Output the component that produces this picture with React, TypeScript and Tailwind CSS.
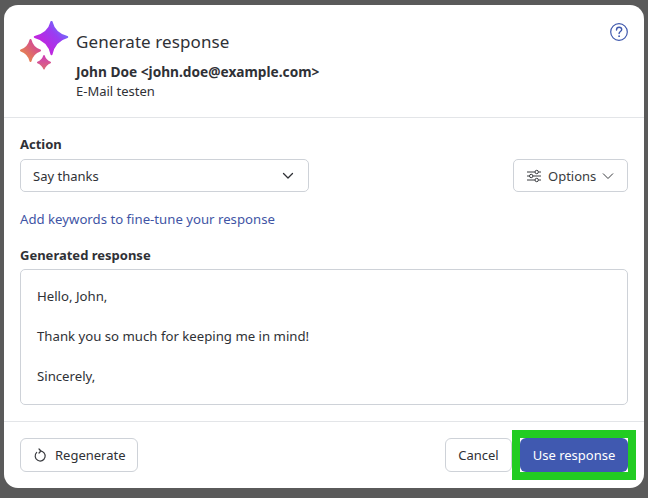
import React from "react";

function Sparkles() {
  const big = "M31.500 0.800 Q34.500 13 47.200 16 Q34.500 19.500 31.500 33.200 Q28.500 19.500 14.800 16 Q28.500 13 31.500 0.800Z";
  const left = "M10.500 19 Q12.500 27 20 29.500 Q12.500 32 10.500 40 Q8.500 32 1 29.500 Q8.500 27 10.500 19Z";
  const small = "M24 34.800 Q25.500 39.500 30.300 41.500 Q25.500 43.500 24 47.800 Q22.500 43.500 17.700 41.500 Q22.500 39.500 24 34.800Z";
  return (
    <svg width="52" height="52" viewBox="0 0 52 52" className="shrink-0" strokeLinejoin="round">
      <defs>
        <linearGradient id="sp1" x1="1" y1="0" x2="0.1" y2="0.8">
          <stop offset="0" stopColor="#4a96ff" />
          <stop offset="0.45" stopColor="#9a3df2" />
          <stop offset="1" stopColor="#cc1fd8" />
        </linearGradient>
        <linearGradient id="sp2" x1="0.9" y1="0.1" x2="0.1" y2="0.9">
          <stop offset="0" stopColor="#d0409f" />
          <stop offset="1" stopColor="#e98b45" />
        </linearGradient>
        <linearGradient id="sp3" x1="0.5" y1="0" x2="0.5" y2="1">
          <stop offset="0" stopColor="#cf3db5" />
          <stop offset="1" stopColor="#dc6a75" />
        </linearGradient>
      </defs>
      <path d={left} fill="url(#sp2)" stroke="url(#sp2)" strokeWidth="2" />
      <path d={small} fill="url(#sp3)" stroke="url(#sp3)" strokeWidth="1.500" />
      <path d={big} fill="#fff" stroke="#fff" strokeWidth="5" />
      <path d={big} fill="url(#sp1)" stroke="url(#sp1)" strokeWidth="2" />
    </svg>
  );
}

export default function App() {
  return (
    <div className="w-[648px] h-[498px] bg-[#5a5a5a] overflow-hidden pl-1 pt-[5px] font-['Noto_Sans','Open_Sans',sans-serif] text-[#2f3136]">
      <div className="w-[640px] h-[483px] bg-white rounded-[14px] flex flex-col overflow-hidden">
        <header className="h-[113px] shrink-0 border-b border-[#e3e5e8] flex pl-[16px] pr-[16px] pt-[16px] relative">
          <Sparkles />
          <div className="ml-[4px] pt-[9px]">
            <h1 className="text-[17px] leading-[24px] font-normal tracking-[0.1px]">Generate response</h1>
            <p className="text-[13.700px] leading-[18px] font-bold mt-[9px]">John Doe &lt;john.doe@example.com&gt;</p>
            <p className="text-[13px] leading-[18px] mt-[1px]">E-Mail testen</p>
          </div>
          <svg width="20" height="20" viewBox="0 0 20 20" className="absolute right-[15px] top-[17px] text-[#4059ad]" fill="none" stroke="currentColor">
            <circle cx="10" cy="10" r="8.300" strokeWidth="1.200" />
            <path d="M7.500 8 C7.500 6.300 8.700 5.300 10.100 5.300 C11.600 5.300 12.700 6.300 12.700 7.600 C12.700 9.500 10.100 9.500 10.100 11.500" strokeWidth="1.400" strokeLinecap="round" />
            <circle cx="10.100" cy="14.200" r="0.900" fill="currentColor" stroke="none" />
          </svg>
        </header>

        <main className="flex-1 px-[16px] pt-[17px] flex flex-col">
          <label className="text-[13px] leading-[18px] font-bold">Action</label>
          <div className="flex justify-between items-start mt-[6px]">
            <div className="w-[289px] h-[33px] border border-[#ced2d8] rounded-[5px] flex items-center justify-between pl-[12px] pr-[13px] text-[13px]">
              <span className="relative top-[1px]">Say thanks</span>
              <svg width="14" height="14" viewBox="0 0 14 14" fill="none" stroke="#2f3136" strokeWidth="1.300" strokeLinecap="round" strokeLinejoin="round">
                <path d="M2.500 4.500 L7 9 L11.500 4.500" />
              </svg>
            </div>
            <button className="w-[115px] h-[33px] border border-[#ced2d8] rounded-[5px] flex items-center pl-[12px] text-[13px] text-[#3a3c40]">
              <svg width="16" height="14" viewBox="0 0 16 14" fill="none" stroke="#3a3c40" strokeWidth="1">
                <path d="M1 3 H9 M12.500 3 H15 M1 7 H3.500 M7 7 H15 M1 11 H9 M12.500 11 H15" />
                <circle cx="10.700" cy="3" r="1.700" />
                <circle cx="5.200" cy="7" r="1.700" />
                <circle cx="10.700" cy="11" r="1.700" />
              </svg>
              <span className="ml-[6px] relative top-[1px]">Options</span>
              <svg width="12" height="12" viewBox="0 0 12 12" fill="none" stroke="#3a3c40" strokeWidth="1" className="ml-[6px]">
                <path d="M1 3.500 L6 8.500 L11 3.500" />
              </svg>
            </button>
          </div>
          <a className="text-[13.200px] leading-[18px] text-[#3f55a5] mt-[18px]">Add keywords to fine-tune your response</a>
          <label className="text-[13px] leading-[18px] font-bold mt-[18px]">Generated response</label>
          <div className="mt-[5px] h-[136px] border border-[#ced2d8] rounded-[5px] px-[16px] pt-[16px] text-[13.200px] leading-[20px]">
            <p>Hello, John,</p>
            <p className="mt-[20px]">Thank you so much for keeping me in mind!</p>
            <p className="mt-[20px]">Sincerely,</p>
          </div>
        </main>

        <footer className="h-[67px] shrink-0 border-t border-[#e3e5e8] flex items-center justify-between pl-[16px] pr-[16px]">
          <button className="w-[118px] h-[34px] border border-[#ced2d8] rounded-[6px] flex items-center pl-[13px] text-[13px]">
            <svg width="15" height="15" viewBox="0 0 15 15" fill="none" stroke="#3a3c40" strokeWidth="1.200" strokeLinecap="round" strokeLinejoin="round">
              <path d="M2.700 4.400 A5 5 0 1 0 6 3" />
              <path d="M5 1 L7 3 L5 5" />
            </svg>
            <span className="ml-[6px] relative top-[1px]">Regenerate</span>
          </button>
          <div className="flex items-center">
            <button className="w-[67px] h-[34px] pt-[1px] border border-[#ced2d8] rounded-[6px] text-[13px]">Cancel</button>
            <div className="ml-[8px] outline-[8px] outline-solid outline-[#22cc22] bg-white">
              <button className="block w-[108px] h-[34px] pt-[1px] bg-[#4059b0] rounded-[6px] text-white text-[13px]">Use response</button>
            </div>
          </div>
        </footer>
      </div>
    </div>
  );
}
